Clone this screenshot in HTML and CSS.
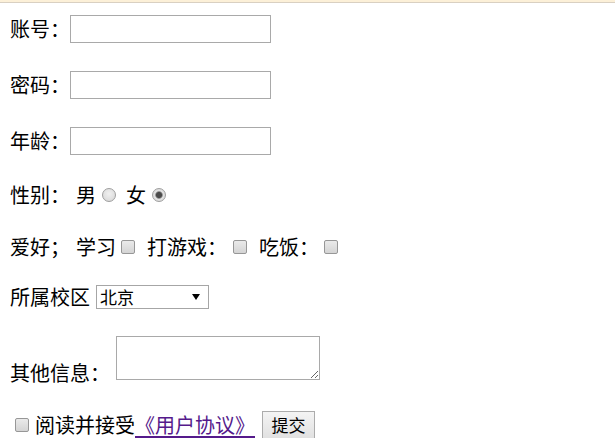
FILE: index.html
```html
<!DOCTYPE html>
<html lang="zh">
<head>
<meta charset="utf-8">
<title>注册</title>
<link rel="stylesheet" href="styles.css">
</head>
<body>
<div class="topline"></div>
<form class="form">
  <div class="row row-text">
    <span class="label">账号：</span>
    <input class="field" type="text">
  </div>
  <div class="row row-text">
    <span class="label">密码：</span>
    <input class="field" type="password">
  </div>
  <div class="row row-text">
    <span class="label">年龄：</span>
    <input class="field" type="text">
  </div>
  <div class="row row-choice">
    <span class="label">性别：</span>
    <span class="opt">男</span><input class="radio" type="radio" name="sex">
    <span class="opt opt-next">女</span><input class="radio" type="radio" name="sex" checked>
  </div>
  <div class="row row-choice">
    <span class="label">爱好；</span>
    <span class="opt">学习</span><input class="check check-tight" type="checkbox">
    <span class="opt opt-far">打游戏：</span><input class="check" type="checkbox">
    <span class="opt opt-far">吃饭：</span><input class="check check-tight" type="checkbox">
  </div>
  <div class="row row-select">
    <span class="label">所属校区</span>
    <select class="select">
      <option>北京</option>
      <option>上海</option>
      <option>广州</option>
    </select>
  </div>
  <div class="row row-area">
    <span class="label">其他信息：</span>
    <textarea class="area"></textarea>
  </div>
  <div class="row row-agree">
    <input class="check check-first" type="checkbox">
    <span class="agree">阅读并接受<a class="link" href="#">《用户协议》</a></span>
    <button class="submit" type="button">提交</button>
  </div>
</form>
</body>
</html>
```

FILE: styles.css
```css
html, body {
  margin: 0;
  padding: 0;
  overflow: hidden;
  background: #ffffff;
}

body {
  font-family: "Noto Sans CJK SC", "Microsoft YaHei", sans-serif;
  font-size: 20px;
  color: #000000;
}

.topline {
  height: 2px;
  background: #fcf0d8;
  border-bottom: 1px solid #d9d0c2;
}

.form {
  display: flex;
  flex-direction: column;
  gap: 24px;
  padding: 10px 0 0 10px;
}

.row {
  display: flex;
  align-items: center;
  line-height: 28px;
  white-space: nowrap;
}

.row-text { height: 32px; }
.row-choice { height: 28px; }
.row-select { height: 24px; }

.row-area {
  align-items: flex-end;
  padding-top: 3px;
}

.row-agree { height: 28px; }

.label { display: inline-block; }

.field {
  box-sizing: border-box;
  width: 201px;
  height: 28px;
  margin: 0;
  border: 1px solid #a9a9a9;
  padding: 2px 4px;
  font: inherit;
  font-size: 17px;
  outline: none;
}

.opt { margin-left: 6px; }
.opt-next { margin-left: 10px; }
.opt-far { margin-left: 12px; }

.radio {
  appearance: none;
  -webkit-appearance: none;
  box-sizing: border-box;
  width: 14px;
  height: 14px;
  margin: 0 0 0 6px;
  border: 1px solid #9e9e9e;
  border-radius: 50%;
  background: radial-gradient(circle at 50% 40%, #f0f0f0 0, #e0e0e0 60%, #d2d2d2 100%);
}

.radio:checked {
  background: radial-gradient(circle at 50% 50%, #4a4a4a 0, #4a4a4a 2.6px, #8e8e8e 3.4px, #e2e2e2 4.2px, #d2d2d2 100%);
}

.check {
  appearance: none;
  -webkit-appearance: none;
  box-sizing: border-box;
  width: 14px;
  height: 14px;
  margin: 0 0 0 6px;
  border: 1px solid #979797;
  border-radius: 2px;
  background: linear-gradient(#eaeaea, #d4d4d4);
}

.check-tight { margin-left: 5px; }
.check-first { margin: 0 6px 0 5px; }

.select {
  appearance: none;
  -webkit-appearance: none;
  box-sizing: border-box;
  width: 113px;
  height: 24px;
  margin: 0 0 0 6px;
  padding: 0 0 0 3px;
  border: 1px solid #a6a6a6;
  border-radius: 0;
  font-family: inherit;
  font-size: 17px;
  line-height: 22px;
  color: #000;
  background: #fff url("data:image/svg+xml,%3Csvg xmlns='http://www.w3.org/2000/svg' width='8' height='6'%3E%3Cpath d='M0 0H8L4 6Z' fill='%23000'/%3E%3C/svg%3E") no-repeat right 8px center;
}

.area {
  box-sizing: border-box;
  width: 204px;
  height: 44px;
  margin: 0 0 7px 6px;
  border: 1px solid #a9a9a9;
  padding: 2px;
  font: inherit;
  font-size: 17px;
  outline: none;
}

.agree { display: inline-block; }

.link {
  color: #551a8b;
  text-decoration: underline;
  text-decoration-thickness: 2px;
  text-underline-offset: 3px;
}

.submit {
  box-sizing: border-box;
  width: 53px;
  height: 28px;
  margin-left: 7px;
  padding: 0;
  border: 1px solid #acacac;
  border-radius: 0;
  background: linear-gradient(#f4f4f4, #e1e1e1);
  font-family: inherit;
  font-size: 17px;
  line-height: 24px;
  color: #000;
}
```
